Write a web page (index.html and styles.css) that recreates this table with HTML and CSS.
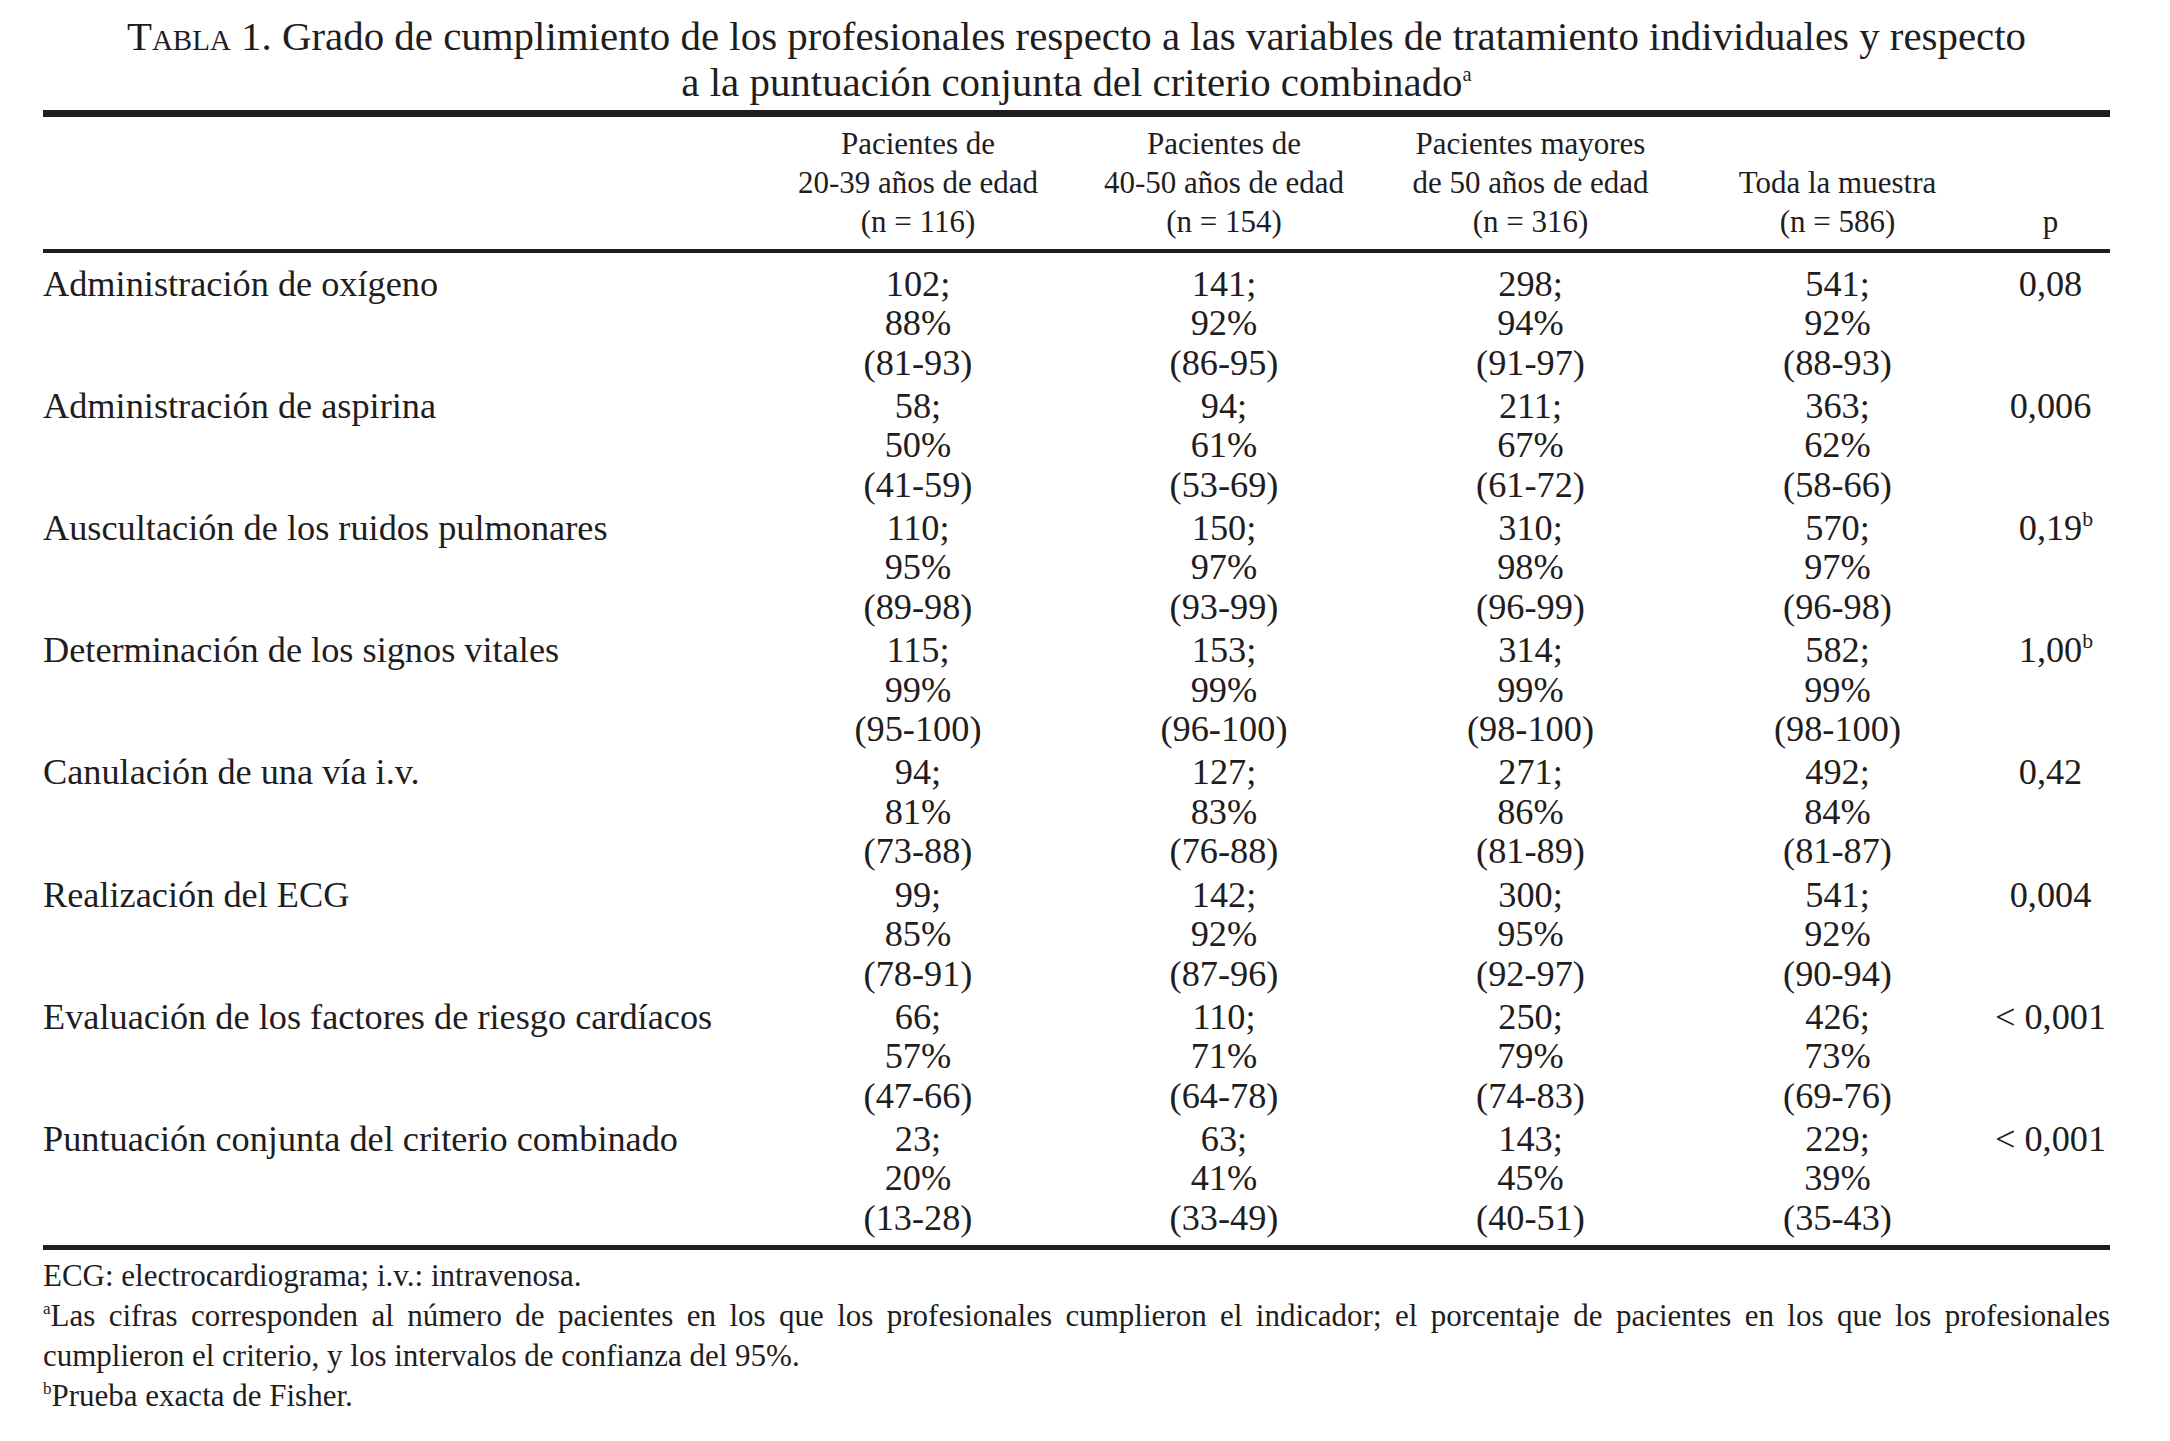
FILE: index.html
```html
<!DOCTYPE html>
<html lang="es">
<head>
<meta charset="utf-8">
<title>Tabla 1</title>
<link rel="stylesheet" href="styles.css">
</head>
<body>
<div class="page">
  <h1 class="title"><span class="sc">Tabla</span> 1. Grado de cumplimiento de los profesionales respecto a las variables de tratamiento individuales y respecto<br>a la puntuación conjunta del criterio combinado<sup class="tsup">a</sup></h1>
  <table class="tbl">
    <colgroup>
      <col class="c-label"><col class="c-num"><col class="c-num"><col class="c-num2"><col class="c-num2"><col class="c-p">
    </colgroup>
    <thead>
      <tr>
        <th class="h-label"></th>
        <th>Pacientes de<br>20-39 años de edad<br>(n = 116)</th>
        <th>Pacientes de<br>40-50 años de edad<br>(n = 154)</th>
        <th>Pacientes mayores<br>de 50 años de edad<br>(n = 316)</th>
        <th>Toda la muestra<br>(n = 586)</th>
        <th>p</th>
      </tr>
    </thead>
    <tbody>
      <tr>
        <td class="label">Administración de oxígeno</td>
        <td>102;<br>88%<br>(81-93)</td>
        <td>141;<br>92%<br>(86-95)</td>
        <td>298;<br>94%<br>(91-97)</td>
        <td>541;<br>92%<br>(88-93)</td>
        <td>0,08</td>
      </tr>
      <tr>
        <td class="label">Administración de aspirina</td>
        <td>58;<br>50%<br>(41-59)</td>
        <td>94;<br>61%<br>(53-69)</td>
        <td>211;<br>67%<br>(61-72)</td>
        <td>363;<br>62%<br>(58-66)</td>
        <td>0,006</td>
      </tr>
      <tr>
        <td class="label">Auscultación de los ruidos pulmonares</td>
        <td>110;<br>95%<br>(89-98)</td>
        <td>150;<br>97%<br>(93-99)</td>
        <td>310;<br>98%<br>(96-99)</td>
        <td>570;<br>97%<br>(96-98)</td>
        <td>0,19<sup class="psup">b</sup></td>
      </tr>
      <tr>
        <td class="label">Determinación de los signos vitales</td>
        <td>115;<br>99%<br>(95-100)</td>
        <td>153;<br>99%<br>(96-100)</td>
        <td>314;<br>99%<br>(98-100)</td>
        <td>582;<br>99%<br>(98-100)</td>
        <td>1,00<sup class="psup">b</sup></td>
      </tr>
      <tr>
        <td class="label">Canulación de una vía i.v.</td>
        <td>94;<br>81%<br>(73-88)</td>
        <td>127;<br>83%<br>(76-88)</td>
        <td>271;<br>86%<br>(81-89)</td>
        <td>492;<br>84%<br>(81-87)</td>
        <td>0,42</td>
      </tr>
      <tr>
        <td class="label">Realización del ECG</td>
        <td>99;<br>85%<br>(78-91)</td>
        <td>142;<br>92%<br>(87-96)</td>
        <td>300;<br>95%<br>(92-97)</td>
        <td>541;<br>92%<br>(90-94)</td>
        <td>0,004</td>
      </tr>
      <tr>
        <td class="label">Evaluación de los factores de riesgo cardíacos</td>
        <td>66;<br>57%<br>(47-66)</td>
        <td>110;<br>71%<br>(64-78)</td>
        <td>250;<br>79%<br>(74-83)</td>
        <td>426;<br>73%<br>(69-76)</td>
        <td>&lt; 0,001</td>
      </tr>
      <tr>
        <td class="label">Puntuación conjunta del criterio combinado</td>
        <td>23;<br>20%<br>(13-28)</td>
        <td>63;<br>41%<br>(33-49)</td>
        <td>143;<br>45%<br>(40-51)</td>
        <td>229;<br>39%<br>(35-43)</td>
        <td>&lt; 0,001</td>
      </tr>
    </tbody>
  </table>
  <div class="notes">
    <p class="note">ECG: electrocardiograma; i.v.: intravenosa.</p>
    <p class="note"><span class="note-line"><sup class="nsup">a</sup>Las cifras corresponden al número de pacientes en los que los profesionales cumplieron el indicador; el porcentaje de pacientes en los que los profesionales</span>cumplieron el criterio, y los intervalos de confianza del 95%.</p>
    <p class="note"><sup class="nsup">b</sup>Prueba exacta de Fisher.</p>
  </div>
</div>
</body>
</html>
```
FILE: styles.css
```css
html, body {
  margin: 0;
  padding: 0;
  background: #ffffff;
}

body {
  font-family: "Liberation Serif", "Times New Roman", serif;
  color: #1f1d1e;
}

.page {
  width: 2067px;
  padding: 14px 0 0 43px;
}

.title {
  margin: 0;
  font-size: 40.9px;
  line-height: 46px;
  font-weight: normal;
  text-align: center;
}

.sc {
  font-variant: small-caps;
}

.tsup {
  font-size: 0.5em;
  line-height: 0;
  vertical-align: 0.75em;
}

.tbl {
  margin-top: 4px;
  width: 2067px;
  table-layout: fixed;
  border-collapse: separate;
  border-spacing: 0;
  border-top: 7px solid #1f1d1e;
}

.c-label { width: 722px; }
.c-num { width: 306px; }
.c-num2 { width: 307px; }
.c-p { width: 119px; }

.tbl th {
  font-weight: normal;
  font-size: 31px;
  line-height: 39px;
  text-align: center;
  vertical-align: bottom;
  padding: 6.5px 0 8.5px;
  border-bottom: 4px solid #1f1d1e;
}

.tbl td {
  font-size: 36.3px;
  line-height: 39.5px;
  text-align: center;
  vertical-align: top;
  padding: 0 0 3.7px;
}

.tbl tbody tr:first-child td {
  padding-top: 11.6px;
}

.tbl tbody tr:last-child td {
  padding-bottom: 6.5px;
  border-bottom: 5px solid #1f1d1e;
}

.tbl td.label {
  text-align: left;
}

.psup {
  display: inline-block;
  width: 0;
  font-size: 0.6em;
  line-height: 0;
  vertical-align: 0.65em;
}

.notes {
  margin-top: 6px;
}

.note {
  margin: 0;
  font-size: 31px;
  line-height: 40px;
  text-align: justify;
}

.note-line {
  display: block;
  text-align: justify;
  text-align-last: justify;
}

.nsup {
  font-size: 0.55em;
  line-height: 0;
  vertical-align: 0.7em;
}
```
